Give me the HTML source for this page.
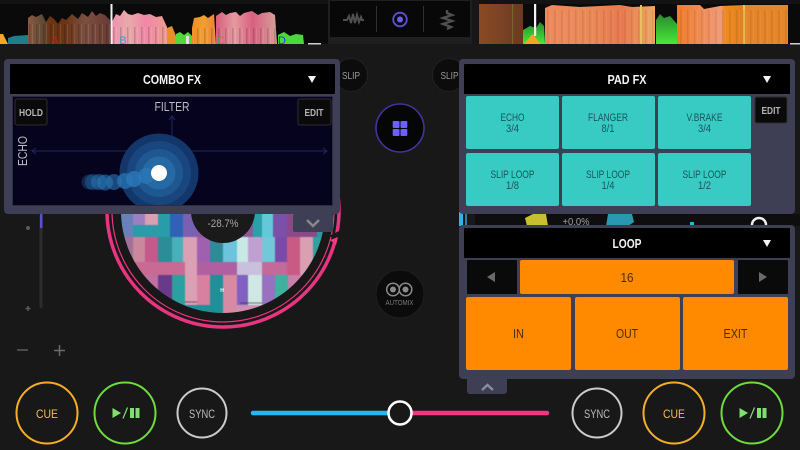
<!DOCTYPE html>
<html><head><meta charset="utf-8"><style>
html,body{margin:0;padding:0;background:#181818}
body{width:800px;height:450px;overflow:hidden;position:relative}
svg{position:absolute;left:0;top:0}
text{font-family:"Liberation Sans",sans-serif}
</style></head><body>
<svg width="800" height="450" viewBox="0 0 800 450" xmlns="http://www.w3.org/2000/svg">
<defs>
<clipPath id="art"><circle cx="223" cy="211" r="102"/></clipPath>
<clipPath id="pad"><rect x="13" y="97" width="319" height="108"/></clipPath>
<pattern id="st" width="7" height="44" patternUnits="userSpaceOnUse"><rect x="1" width="1.500" height="44" fill="#000" fill-opacity=".16"/><rect x="4" width="1" height="44" fill="#fff" fill-opacity=".1"/></pattern>
<linearGradient id="b1" x1="0" x2="1" y1="0" y2="0"><stop offset="0" stop-color="#8a5a45"/><stop offset=".18" stop-color="#5f4a35"/><stop offset=".26" stop-color="#6b3515"/><stop offset=".45" stop-color="#6b3515"/><stop offset=".7" stop-color="#7a5040"/><stop offset="1" stop-color="#6a3a33"/></linearGradient>
<linearGradient id="b2" x1="0" x2="1" y1="0" y2="0"><stop offset="0" stop-color="#ef90b0"/><stop offset=".3" stop-color="#e8aaa8"/><stop offset=".6" stop-color="#f088a8"/><stop offset="1" stop-color="#ec9c90"/></linearGradient>
<linearGradient id="b3" x1="0" x2="1" y1="0" y2="0"><stop offset="0" stop-color="#ef8d25"/><stop offset=".5" stop-color="#f0a030"/><stop offset="1" stop-color="#ed7f3c"/></linearGradient>
<linearGradient id="b4" x1="0" x2="1" y1="0" y2="0"><stop offset="0" stop-color="#d85d7e"/><stop offset=".3" stop-color="#e59a9f"/><stop offset=".6" stop-color="#d86080"/><stop offset="1" stop-color="#d8a098"/></linearGradient>
<linearGradient id="r1" x1="0" x2="1" y1="0" y2="0"><stop offset="0" stop-color="#8a4a22"/><stop offset=".5" stop-color="#7a4326"/><stop offset="1" stop-color="#6a3a20"/></linearGradient>
<linearGradient id="r2" x1="0" x2="1" y1="0" y2="0"><stop offset="0" stop-color="#ee8a5e"/><stop offset=".4" stop-color="#ea8a58"/><stop offset=".7" stop-color="#e87a50"/><stop offset="1" stop-color="#f0a860"/></linearGradient>
<linearGradient id="r3" x1="0" x2="1" y1="0" y2="0"><stop offset="0" stop-color="#f07c25"/><stop offset=".3" stop-color="#ef8a50"/><stop offset=".65" stop-color="#f09a78"/><stop offset=".7" stop-color="#f08a20"/><stop offset="1" stop-color="#e08020"/></linearGradient>
<linearGradient id="gr" x1="0" x2="0" y1="0" y2="1"><stop offset="0" stop-color="#2a8a30"/><stop offset="1" stop-color="#48e838"/></linearGradient>
</defs>

<!-- waveform area -->
<rect x="0" y="0" width="328" height="44" fill="#0a0a0a"/>
<rect x="472" y="0" width="328" height="44" fill="#0a0a0a"/>
<rect x="0" y="0" width="328" height="4" fill="#131313"/>
<rect x="472" y="0" width="328" height="4" fill="#131313"/>
<rect x="472" y="0" width="7" height="44" fill="#171717"/>

<!-- left wave -->
<polygon points="8,38 14,36 28,35 28,44 8,44" fill="#1f7f88"/>
<polygon points="28,18 32,15 36,17 42,14 46,22 50,16 54,19 58,24 62,18 66,20 72,14 78,19 82,13 88,17 92,11 96,16 100,13 105,15 110,20 110,44 28,44" fill="url(#b1)"/>
<polygon points="112,22 116,14 120,16 124,10 128,14 132,15 138,13 144,15 150,14 156,17 162,16 167,27 167,44 112,44" fill="url(#b2)"/>
<polygon points="167,28 172,26 176,36 176,44 167,44" fill="#e89028"/>
<polygon points="176,34 180,32 184,35 188,32 192,36 192,44 176,44" fill="#52d838"/>
<rect x="186" y="36" width="3" height="8" fill="#d9e7d0"/>
<polygon points="192,28 194,18 200,17 204,15 208,18 214,14 216,44 192,44" fill="url(#b3)"/>
<polygon points="216,16 222,12 226,15 230,13 236,12 240,16 244,13 252,11 258,15 262,13 270,12 275,15 277,44 216,44" fill="url(#b4)"/>
<rect x="28" y="24" width="84" height="20" fill="url(#st)"/>
<rect x="112" y="27" width="55" height="17" fill="url(#st)"/>
<rect x="192" y="28" width="85" height="16" fill="url(#st)"/>
<polygon points="278,35 284,32 290,36 296,34 303,35 304,44 278,44" fill="#4ad83a"/>
<rect x="308" y="43" width="13" height="1.500" fill="#cfcfcf"/>
<rect x="110.500" y="4" width="2" height="40" fill="#f2f2f2"/>
<polygon points="0,44 0,34 3,34 8,44" fill="#f5a623"/>
<text x="55" y="44" font-size="11" fill="#c21d1d" text-anchor="middle">A</text>
<text x="123" y="44" font-size="11" fill="#2da6c6" text-anchor="middle">B</text>
<text x="221" y="44" font-size="11" fill="#3cb44a" text-anchor="middle">C</text>
<text x="282" y="44" font-size="11" fill="#3a35c8" text-anchor="middle">D</text>

<!-- right wave -->
<rect x="479" y="4" width="44" height="40" fill="url(#r1)"/>
<rect x="512" y="4" width="1" height="40" fill="#76682a"/>
<polygon points="523,30 530,26 536,28 540,22 544,26 545,44 523,44" fill="url(#gr)"/>
<polygon points="545,8 552,5 580,7 620,5 632,7 655,6 655,44 545,44" fill="url(#r2)"/>
<rect x="640" y="5" width="2" height="39" fill="#e8c060"/>
<polygon points="656,20 660,14 664,18 670,16 677,24 677,44 656,44" fill="url(#gr)"/>
<polygon points="677,5 700,5 704,9 720,6 745,5 745,44 677,44" fill="url(#r3)"/>
<rect x="745" y="5" width="43" height="39" fill="#e6862a"/>
<rect x="743" y="5" width="2" height="39" fill="#f0c060"/>
<rect x="545" y="10" width="110" height="34" fill="url(#st)" fill-opacity=".5"/>
<rect x="677" y="10" width="111" height="34" fill="url(#st)" fill-opacity=".5"/>
<rect x="790" y="43" width="10" height="1.500" fill="#cfcfcf"/>
<rect x="534" y="4" width="2.200" height="32" fill="#f4f4f4"/>
<polygon points="532.500,34 541,44 524,44" fill="#f5a623"/>

<!-- center top -->
<rect x="328" y="0" width="144" height="44" fill="#1f1f1f"/>
<rect x="330" y="1" width="140" height="36" fill="#080808"/>
<rect x="376" y="6" width="1" height="26" fill="#2f2f2f"/>
<rect x="423" y="6" width="1" height="26" fill="#2f2f2f"/>
<path d="M343 20h4l2-4 2 7 2-9 2 9 2-8 2 7 2-5 1 3h2" fill="none" stroke="#4f4f4f" stroke-width="2"/>
<circle cx="400" cy="19.500" r="6.800" fill="none" stroke="#5a50d8" stroke-width="1.800"/>
<circle cx="400" cy="19.500" r="3" fill="#6a60f0"/>
<path d="M447 10l0 3 5 2-9 3 9 3-9 3 8 3-4 2" fill="none" stroke="#4f4f4f" stroke-width="2.400"/>

<!-- slider left -->
<rect x="39.500" y="214" width="3" height="94" rx="1.500" fill="#2c2c2c"/>
<rect x="40" y="214" width="2.500" height="14" fill="#5a50d8"/>
<circle cx="28" cy="228" r="2" fill="#5a5a5a"/>
<path d="M25.500 308.500h5M28 306v5" stroke="#5a5a5a" stroke-width="1.500"/>
<path d="M17 350h11" stroke="#5a5a5a" stroke-width="1.500"/>
<path d="M54 350.500h11M59.500 345v11" stroke="#6a6a6a" stroke-width="1.500"/>

<!-- jog wheel -->
<circle cx="223" cy="211" r="116" fill="none" stroke="#e9357f" stroke-width="3.500"/>
<circle cx="223" cy="211" r="111" fill="none" stroke="#e9357f" stroke-width="1.200"/>
<path d="M329 236 L345 244 L345 228 Z" fill="#181818"/>
<polygon points="330,240 338,237 336,245" fill="#f03a85"/>
<g clip-path="url(#art)" style="filter:blur(.5px)">
<rect x="115" y="205" width="220" height="115" fill="#2a9aa0"/>
<rect x="118" y="205" width="15" height="32" fill="#6a80b8"/>
<rect x="133" y="205" width="12" height="20" fill="#9a80c0"/>
<rect x="145" y="205" width="13" height="20" fill="#d8a0b0"/>
<rect x="133" y="225" width="37" height="12" fill="#2a9ba8"/>
<rect x="158" y="205" width="12" height="32" fill="#2a9ba8"/>
<rect x="170" y="205" width="13" height="32" fill="#2f62b4"/>
<rect x="183" y="205" width="14" height="32" fill="#7a60b0"/>
<rect x="197" y="205" width="56" height="33" fill="#8a5a9a"/>
<rect x="253" y="205" width="9" height="33" fill="#2aa0a8"/>
<rect x="262" y="205" width="11" height="33" fill="#64c8d8"/>
<rect x="273" y="205" width="14" height="33" fill="#7a50a8"/>
<rect x="287" y="205" width="30" height="33" fill="#8a4a8a"/>
<rect x="118" y="237" width="15" height="38" fill="#a07098"/>
<rect x="133" y="237" width="12" height="25" fill="#c9889c"/>
<rect x="145" y="237" width="13" height="25" fill="#c45a8c"/>
<rect x="158" y="237" width="14" height="25" fill="#2c8c98"/>
<rect x="172" y="237" width="11" height="25" fill="#4ab0b8"/>
<rect x="183" y="237" width="14" height="25" fill="#dca0b5"/>
<rect x="197" y="237" width="13" height="25" fill="#a060b0"/>
<rect x="210" y="237" width="13" height="25" fill="#2c8c98"/>
<rect x="223" y="237" width="14" height="25" fill="#6cc4dc"/>
<rect x="237" y="237" width="11" height="25" fill="#c8e8e4"/>
<rect x="248" y="237" width="14" height="25" fill="#c0a0d0"/>
<rect x="262" y="237" width="13" height="25" fill="#70c8d8"/>
<rect x="275" y="237" width="12" height="25" fill="#7a4aa8"/>
<rect x="287" y="237" width="13" height="38" fill="#c85a84"/>
<rect x="300" y="237" width="13" height="38" fill="#d8a0b0"/>
<rect x="313" y="237" width="12" height="38" fill="#30a0a0"/>
<rect x="133" y="262" width="52" height="13" fill="#c96a94"/>
<rect x="185" y="262" width="12" height="13" fill="#dca0b5"/>
<rect x="197" y="262" width="40" height="13" fill="#b060a0"/>
<rect x="237" y="262" width="25" height="13" fill="#c8c0dc"/>
<rect x="262" y="262" width="25" height="13" fill="#c46a9a"/>
<rect x="118" y="275" width="40" height="42" fill="#2a9aa0"/>
<rect x="133" y="275" width="25" height="15" fill="#c070a0"/>
<rect x="158" y="275" width="14" height="30" fill="#6a3a8a"/>
<rect x="172" y="275" width="13" height="30" fill="#2aa0a0"/>
<rect x="185" y="275" width="12" height="30" fill="#dca0b5"/>
<rect x="197" y="275" width="13" height="30" fill="#d880a0"/>
<rect x="210" y="275" width="13" height="45" fill="#1f9098"/>
<rect x="223" y="275" width="14" height="45" fill="#d78aa4"/>
<rect x="237" y="275" width="11" height="30" fill="#8060c0"/>
<rect x="248" y="275" width="14" height="30" fill="#cfe8e4"/>
<rect x="262" y="275" width="13" height="30" fill="#9a70c0"/>
<rect x="275" y="275" width="13" height="30" fill="#40b0a0"/>
<rect x="288" y="275" width="15" height="30" fill="#c880a8"/>
<rect x="158" y="305" width="52" height="15" fill="#1f9098"/>
<rect x="237" y="305" width="60" height="15" fill="#d090b0"/>
<path d="M185 302H197M158 305H172M240 303H262" stroke="#2a2030" stroke-width="1" stroke-opacity=".6"/>
</g>
<text x="222" y="292" font-size="5" font-weight="bold" fill="#fff" text-anchor="middle">H</text>
<circle cx="223" cy="211" r="32" fill="#1a1a1a"/>
<text x="223" y="227" font-size="11" fill="#a8a8a8" text-anchor="middle" textLength="31" lengthAdjust="spacingAndGlyphs">-28.7%</text>
<rect x="293" y="214" width="40" height="18" rx="2" fill="#3e3e55"/>
<path d="M307 220l6 6 6-6" fill="none" stroke="#888" stroke-width="2.500"/>

<!-- slip -->
<circle cx="351" cy="75" r="16.500" fill="#0c0c0c" stroke="#222"/>
<text x="351" y="79" font-size="10.500" fill="#9a9a9a" text-anchor="middle" textLength="18" lengthAdjust="spacingAndGlyphs">SLIP</text>
<circle cx="449" cy="75" r="16.500" fill="#0c0c0c" stroke="#222"/>
<text x="449.500" y="79" font-size="10.500" fill="#9a9a9a" text-anchor="middle" textLength="18" lengthAdjust="spacingAndGlyphs">SLIP</text>

<!-- center buttons -->
<circle cx="400" cy="128" r="24" fill="#060606" stroke="#3f3595" stroke-width="1.600"/>
<g fill="#6a60ff"><rect x="392.700" y="121" width="6.800" height="7" rx="1"/><rect x="400.500" y="121" width="6.800" height="7" rx="1"/><rect x="392.700" y="129" width="6.800" height="7" rx="1"/><rect x="400.500" y="129" width="6.800" height="7" rx="1"/></g>
<circle cx="400" cy="294" r="24" fill="#0b0b0b" stroke="#1f1f1f"/>
<g fill="none" stroke="#8a8a8a" stroke-width="1.500"><circle cx="393" cy="289.500" r="6.300"/><circle cx="405.500" cy="289.500" r="6.300"/></g>
<circle cx="393" cy="289.500" r="3" fill="#8a8a8a"/><circle cx="405.500" cy="289.500" r="3" fill="#8a8a8a"/>
<text x="399.500" y="305" font-size="7" fill="#7a7a7a" text-anchor="middle" textLength="28" lengthAdjust="spacingAndGlyphs">AUTOMIX</text>

<!-- under pad fx peek -->
<rect x="459" y="212" width="4" height="14" fill="#2fb4e8"/>
<rect x="465" y="212" width="2" height="14" fill="#2a80a8"/>
<rect x="475" y="214" width="325" height="12" fill="#0e0e0e"/>
<polygon points="525,218 533,214 546,214 548,226 527,226" fill="#c8c030"/>
<polygon points="608,214 632,214 634,222 628,226 606,226" fill="#2a98b0"/>
<text x="576" y="225" font-size="10" fill="#a0a0a0" text-anchor="middle" textLength="27" lengthAdjust="spacingAndGlyphs">+0.0%</text>
<path d="M752 225a7 7 0 0 1 14 0" fill="none" stroke="#eee" stroke-width="2.500"/>
<rect x="690" y="222" width="4" height="4" fill="#2fb4e8"/>

<!-- COMBO FX -->
<rect x="4" y="59" width="336" height="155" rx="4" fill="#3e3e55"/>
<rect x="10" y="64" width="325" height="30" rx="1" fill="#000"/>
<text x="172" y="84" font-size="13" font-weight="bold" fill="#f4f4f4" text-anchor="middle" textLength="58" lengthAdjust="spacingAndGlyphs">COMBO FX</text>
<polygon points="308,76 316,76 312,83" fill="#f4f4f4"/>
<rect x="12.500" y="96.500" width="320" height="109" fill="#05031e" stroke="#2c2c44"/>
<g clip-path="url(#pad)">
<g fill="none" stroke="#25255f" stroke-width="1">
<path d="M172 116v84M169 120l3-4 3 4M169 196l3 4 3-4"/>
<path d="M32 151h295M36 148l-4 3 4 3M323 148l4 3-4 3"/>
</g>
<circle cx="159" cy="173" r="39.500" fill="#13376a"/>
<circle cx="159" cy="173" r="32" fill="#19467e"/>
<circle cx="159" cy="173" r="24" fill="#1f5890"/>
<circle cx="159" cy="173" r="16.500" fill="#256aa4"/>
<g fill="#2a78b8" fill-opacity=".8">
<circle cx="89" cy="182" r="7.500" fill-opacity=".3"/>
<circle cx="93" cy="182" r="8" fill-opacity=".4"/>
<circle cx="99" cy="182" r="8" fill-opacity=".5"/>
<circle cx="105" cy="182.500" r="8" fill-opacity=".6"/>
<circle cx="114" cy="182" r="8" fill-opacity=".6"/>
<circle cx="125" cy="181" r="8" fill-opacity=".7"/>
<circle cx="134" cy="179" r="8"/>
<circle cx="146" cy="176" r="8"/>
</g>
<circle cx="159" cy="173" r="8" fill="#fff"/>
</g>
<rect x="15" y="99" width="32" height="26" rx="2" fill="#0a0a0a" stroke="#2e2e2e"/>
<text x="31" y="116" font-size="10.500" font-weight="bold" fill="#b4b4b4" text-anchor="middle" textLength="24" lengthAdjust="spacingAndGlyphs">HOLD</text>
<rect x="298" y="99" width="33" height="26" rx="2" fill="#0a0a0a" stroke="#2e2e2e"/>
<text x="314" y="116" font-size="10.500" font-weight="bold" fill="#b4b4b4" text-anchor="middle" textLength="19" lengthAdjust="spacingAndGlyphs">EDIT</text>
<text x="172" y="111" font-size="13" fill="#bdbdbd" text-anchor="middle" textLength="35" lengthAdjust="spacingAndGlyphs">FILTER</text>
<text transform="translate(27,151) rotate(-90)" font-size="13" fill="#bdbdbd" text-anchor="middle" textLength="30" lengthAdjust="spacingAndGlyphs">ECHO</text>

<!-- PAD FX -->
<rect x="459" y="59" width="336" height="155" rx="4" fill="#3e3e55"/>
<rect x="464" y="64" width="326" height="30" rx="1" fill="#000"/>
<text x="627" y="84" font-size="13" font-weight="bold" fill="#f4f4f4" text-anchor="middle" textLength="39" lengthAdjust="spacingAndGlyphs">PAD FX</text>
<polygon points="763,76 771,76 767,83" fill="#f4f4f4"/>
<g fill="#38cbc3">
<rect x="466" y="96" width="93" height="53" rx="2"/><rect x="562" y="96" width="93" height="53" rx="2"/><rect x="658" y="96" width="93" height="53" rx="2"/>
<rect x="466" y="153" width="93" height="53" rx="2"/><rect x="562" y="153" width="93" height="53" rx="2"/><rect x="658" y="153" width="93" height="53" rx="2"/>
</g>
<g font-size="11" fill="#17575a" text-anchor="middle">
<text x="512.500" y="121" textLength="24" lengthAdjust="spacingAndGlyphs">ECHO</text><text x="512.500" y="132" textLength="13" lengthAdjust="spacingAndGlyphs">3/4</text>
<text x="608" y="121" textLength="40" lengthAdjust="spacingAndGlyphs">FLANGER</text><text x="608" y="132" textLength="13" lengthAdjust="spacingAndGlyphs">8/1</text>
<text x="704.500" y="121" textLength="36" lengthAdjust="spacingAndGlyphs">V.BRAKE</text><text x="704.500" y="132" textLength="13" lengthAdjust="spacingAndGlyphs">3/4</text>
<text x="512.500" y="178" textLength="44" lengthAdjust="spacingAndGlyphs">SLIP LOOP</text><text x="512.500" y="189" textLength="13" lengthAdjust="spacingAndGlyphs">1/8</text>
<text x="608" y="178" textLength="44" lengthAdjust="spacingAndGlyphs">SLIP LOOP</text><text x="608" y="189" textLength="13" lengthAdjust="spacingAndGlyphs">1/4</text>
<text x="704.500" y="178" textLength="44" lengthAdjust="spacingAndGlyphs">SLIP LOOP</text><text x="704.500" y="189" textLength="13" lengthAdjust="spacingAndGlyphs">1/2</text>
</g>
<rect x="755" y="97" width="32" height="26" rx="2" fill="#0a0a0a" stroke="#2e2e2e"/>
<text x="771" y="114" font-size="10.500" font-weight="bold" fill="#b4b4b4" text-anchor="middle" textLength="19" lengthAdjust="spacingAndGlyphs">EDIT</text>

<!-- LOOP -->
<rect x="459" y="225" width="336" height="154" rx="4" fill="#3e3e55"/>
<rect x="464" y="228" width="326" height="30" rx="1" fill="#000"/>
<text x="627" y="248" font-size="13" font-weight="bold" fill="#f4f4f4" text-anchor="middle" textLength="29" lengthAdjust="spacingAndGlyphs">LOOP</text>
<polygon points="763,240 771,240 767,247" fill="#f4f4f4"/>
<rect x="467" y="260" width="50" height="34" rx="1" fill="#0a0a0a"/>
<rect x="738" y="260" width="50" height="34" rx="1" fill="#0a0a0a"/>
<polygon points="495,272 495,282 487,277" fill="#6a6a6a"/>
<polygon points="759,272 759,282 767,277" fill="#6a6a6a"/>
<g fill="#ff8a00">
<rect x="520" y="260" width="214" height="34" rx="2"/>
<rect x="466" y="297" width="105" height="73" rx="2"/><rect x="575" y="297" width="105" height="73" rx="2"/><rect x="683" y="297" width="105" height="73" rx="2"/>
</g>
<g font-size="12.500" fill="#4d2c00" text-anchor="middle">
<text x="627" y="282" textLength="13" lengthAdjust="spacingAndGlyphs">16</text>
<text x="518.500" y="338" textLength="11" lengthAdjust="spacingAndGlyphs">IN</text><text x="627" y="338" textLength="22" lengthAdjust="spacingAndGlyphs">OUT</text><text x="735.500" y="338" textLength="24" lengthAdjust="spacingAndGlyphs">EXIT</text>
</g>
<path d="M467 378h40v13a3 3 0 0 1-3 3h-34a3 3 0 0 1-3-3z" fill="#3e3e55"/>
<path d="M482 390l5.500-5 5.500 5" fill="none" stroke="#8a8a9a" stroke-width="2.500"/>

<!-- bottom controls -->
<g fill="none" stroke-width="2">
<circle cx="47" cy="413" r="30.500" stroke="#f5ae27"/>
<circle cx="125" cy="413" r="30.500" stroke="#6fdc3c"/>
<circle cx="202" cy="413" r="24.500" stroke="#cccccc"/>
<circle cx="597" cy="413" r="24.500" stroke="#cccccc"/>
<circle cx="674" cy="413" r="30.500" stroke="#f5ae27"/>
<circle cx="752" cy="413" r="30.500" stroke="#6fdc3c"/>
</g>
<g font-size="12" text-anchor="middle">
<text x="47" y="418" fill="#f1bd5e" textLength="22" lengthAdjust="spacingAndGlyphs">CUE</text>
<text x="674" y="418" fill="#f1bd5e" textLength="22" lengthAdjust="spacingAndGlyphs">CUE</text>
<text x="202" y="418" fill="#bbb" textLength="26" lengthAdjust="spacingAndGlyphs">SYNC</text>
<text x="597" y="418" fill="#bbb" textLength="26" lengthAdjust="spacingAndGlyphs">SYNC</text>
</g>
<polygon points="112.500,408 112.500,418 121,413" fill="#7fe070"/>
<path d="M123 418.500l4.500-11" stroke="#7fe070" stroke-width="1.200"/>
<rect x="130" y="408" width="4" height="10" fill="#7fe070"/><rect x="135.500" y="408" width="4" height="10" fill="#7fe070"/>
<polygon points="739.500,408 739.500,418 748,413" fill="#7fe070"/>
<path d="M750 418.500l4.500-11" stroke="#7fe070" stroke-width="1.200"/>
<rect x="757" y="408" width="4" height="10" fill="#7fe070"/><rect x="762.500" y="408" width="4" height="10" fill="#7fe070"/>

<path d="M253 413H400" stroke="#26b7ee" stroke-width="4.500" stroke-linecap="round"/>
<path d="M400 413H547" stroke="#f0377f" stroke-width="4.500" stroke-linecap="round"/>
<circle cx="400" cy="413" r="11.500" fill="#181818" stroke="#fff" stroke-width="2.600"/>
</svg>
</body></html>
